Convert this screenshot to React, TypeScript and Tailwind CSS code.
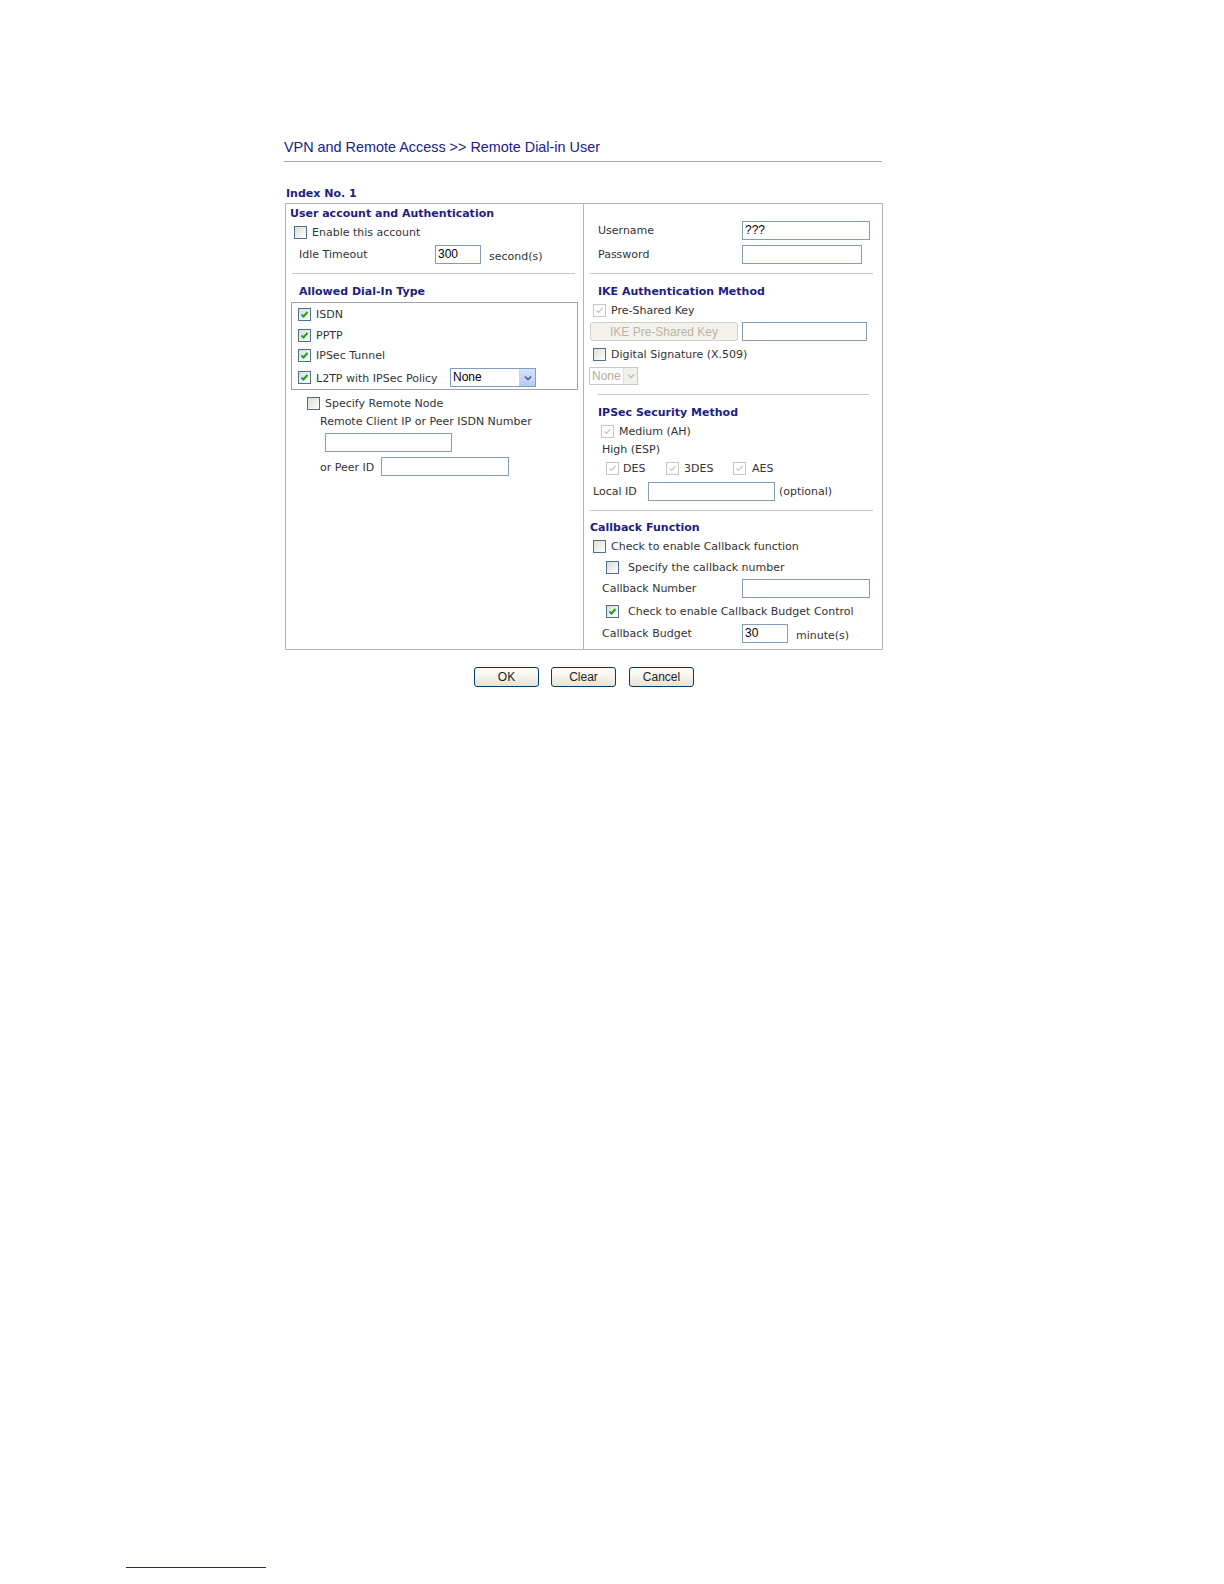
import React from "react";

const F = { fontFamily: '"DejaVu Sans", Verdana, sans-serif' };

function Cb({ checked = false, disabled = false }: { checked?: boolean; disabled?: boolean }) {
  const base = disabled
    ? "border-[#cac8bb] bg-white"
    : "border-[#4f6d8c] bg-gradient-to-br from-[#dcdcd7] to-[#ffffff]";
  return (
    <div className={`w-[13px] h-[13px] shrink-0 border ${base} flex items-center justify-center`}>
      {checked && (
        <svg width="9" height="9" viewBox="0 0 9 9">
          <path
            d="M1.5 4.5 L3.5 6.5 L7.5 2"
            fill="none"
            stroke={disabled ? "#c6c6c6" : "#21a121"}
            strokeWidth={disabled ? 1.2 : 2}
          />
        </svg>
      )}
    </div>
  );
}

function Input({ w, value = "" }: { w: string; value?: string }) {
  return (
    <div
      className={`${w} h-[19px] shrink-0 border border-[#7f9db9] bg-white text-[12px] leading-[17px] pl-[2px] text-black`}
      style={{ fontFamily: '"Liberation Sans", Arial, sans-serif' }}
    >
      {value}
    </div>
  );
}

function Heading({ children, cls }: { children: React.ReactNode; cls: string }) {
  return <div className={`h-[13px] leading-[13px] text-[11px] font-bold text-[#1e1e80] whitespace-nowrap ${cls}`}>{children}</div>;
}

function Txt({ children, cls = "" }: { children: React.ReactNode; cls?: string }) {
  return <div className={`text-[11px] leading-[13px] text-[#333333] whitespace-nowrap ${cls}`}>{children}</div>;
}

function XpButton({ label }: { label: string }) {
  return (
    <div
      className="w-[65px] h-[20px] rounded-[3px] border border-[#003c74] bg-gradient-to-b from-[#ffffff] to-[#e6e4d8] flex items-center justify-center text-[12px] text-[#222222]"
      style={{ fontFamily: '"Liberation Sans", Arial, sans-serif' }}
    >
      {label}
    </div>
  );
}

export default function App() {
  return (
    <div className="w-[1224px] h-[1584px] bg-white flex flex-col" style={F}>
      <div className="pl-[284px] pt-[139px] flex flex-col">
        <div
          className="h-[22px] leading-[16px] text-[14.4px] text-[#202088]"
          style={{ fontFamily: '"Liberation Sans", Arial, sans-serif' }}
        >
          VPN and Remote Access &gt;&gt; Remote Dial-in User
        </div>
        <div className="w-[598px] h-px bg-[#a8a8a8]" />
        <div className="mt-[25px] ml-[2px] h-[13px] leading-[13px] text-[11px] font-bold text-[#1e1e80]">Index No. 1</div>
        {/* Main box */}
        <div className="mt-[3px] ml-[1px] w-[598px] h-[447px] border border-[#b4b4b4] flex">
          {/* Left column */}
          <div className="w-[298px] border-r border-[#b4b4b4] flex flex-col">
            <Heading cls="mt-[3px] ml-[4px]">User account and Authentication</Heading>
            <div className="mt-[6px] ml-[8px] h-[13px] flex items-center">
              <Cb />
              <Txt cls="ml-[5px]">Enable this account</Txt>
            </div>
            <div className="mt-[6px] ml-[13px] h-[19px] flex items-center">
              <Txt cls="w-[136px]">Idle Timeout</Txt>
              <Input w="w-[46px]" value="300" />
              <Txt cls="ml-[8px] mt-[3px]">second(s)</Txt>
            </div>
            <div className="mt-[9px] ml-[6px] w-[283px] h-px bg-[#c8c8c8]" />
            <Heading cls="mt-[11px] ml-[13px]">Allowed Dial-In Type</Heading>
            <div className="mt-[4px] ml-[5px] w-[287px] h-[88px] border border-[#a0a0a0] flex flex-col">
              <div className="mt-[5px] ml-[6px] h-[13px] flex items-center">
                <Cb checked />
                <Txt cls="ml-[5px]">ISDN</Txt>
              </div>
              <div className="mt-[8px] ml-[6px] h-[13px] flex items-center">
                <Cb checked />
                <Txt cls="ml-[5px]">PPTP</Txt>
              </div>
              <div className="mt-[7px] ml-[6px] h-[13px] flex items-center">
                <Cb checked />
                <Txt cls="ml-[5px]">IPSec Tunnel</Txt>
              </div>
              <div className="mt-[6px] ml-[6px] h-[19px] flex items-center">
                <Cb checked />
                <Txt cls="ml-[5px] w-[134px] mt-[2px]">L2TP with IPSec Policy</Txt>
                <div className="w-[86px] h-[19px] border border-[#7f9db9] bg-white flex items-center">
                  <div
                    className="flex-1 text-[12px] leading-[17px] pl-[2px] text-black"
                    style={{ fontFamily: '"Liberation Sans", Arial, sans-serif' }}
                  >
                    None
                  </div>
                  <div className="w-[16px] h-[17px] bg-gradient-to-b from-[#d6e2fc] to-[#b6cbf6] border-l border-[#c3d3fd] flex items-center justify-center">
                    <svg width="8" height="6" viewBox="0 0 8 6">
                      <path d="M1 1.5 L4 4.5 L7 1.5" fill="none" stroke="#4d6185" strokeWidth="1.6" />
                    </svg>
                  </div>
                </div>
              </div>
            </div>
            <div className="mt-[7px] ml-[21px] h-[13px] flex items-center">
              <Cb />
              <Txt cls="ml-[5px]">Specify Remote Node</Txt>
            </div>
            <Txt cls="mt-[5px] ml-[34px] h-[13px]">Remote Client IP or Peer ISDN Number</Txt>
            <div className="mt-[5px] ml-[39px]">
              <Input w="w-[127px]" />
            </div>
            <div className="mt-[5px] ml-[34px] h-[19px] flex items-center">
              <Txt cls="w-[61px] mt-[2px]">or Peer ID</Txt>
              <Input w="w-[128px]" />
            </div>
          </div>
          {/* Right column */}
          <div className="flex-1 flex flex-col">
            <div className="mt-[17px] ml-[14px] h-[19px] flex items-center">
              <Txt cls="w-[144px]">Username</Txt>
              <Input w="w-[128px]" value="???" />
            </div>
            <div className="mt-[5px] ml-[14px] h-[19px] flex items-center">
              <Txt cls="w-[144px]">Password</Txt>
              <Input w="w-[120px]" />
            </div>
            <div className="mt-[9px] ml-[6px] w-[283px] h-px bg-[#c8c8c8]" />
            <Heading cls="mt-[11px] ml-[14px]">IKE Authentication Method</Heading>
            <div className="mt-[6px] ml-[9px] h-[13px] flex items-center">
              <Cb checked disabled />
              <Txt cls="ml-[5px]">Pre-Shared Key</Txt>
            </div>
            <div className="mt-[5px] ml-[6px] h-[19px] flex items-center">
              <div
                className="w-[148px] h-[19px] rounded-[3px] border border-[#d2d0c4] bg-[#f3f2ec] flex items-center justify-center text-[12px] text-[#b8b5a6]"
                style={{ fontFamily: '"Liberation Sans", Arial, sans-serif' }}
              >
                IKE Pre-Shared Key
              </div>
              <div className="ml-[4px]">
                <Input w="w-[125px]" />
              </div>
            </div>
            <div className="mt-[7px] ml-[9px] h-[13px] flex items-center">
              <Cb />
              <Txt cls="ml-[5px]">Digital Signature (X.509)</Txt>
            </div>
            <div className="mt-[6px] ml-[5px] w-[49px] h-[18px] border border-[#cac8bb] bg-white flex items-center">
              <div
                className="flex-1 text-[12px] leading-[16px] pl-[2px] text-[#b0ada0]"
                style={{ fontFamily: '"Liberation Sans", Arial, sans-serif' }}
              >
                None
              </div>
              <div className="w-[14px] h-[16px] bg-[#f1f0ea] border-l border-[#e2e0d6] flex items-center justify-center">
                <svg width="8" height="6" viewBox="0 0 8 6">
                  <path d="M1 1.5 L4 4.5 L7 1.5" fill="none" stroke="#c4c2b6" strokeWidth="1.6" />
                </svg>
              </div>
            </div>
            <div className="mt-[9px] ml-[14px] w-[271px] h-px bg-[#c8c8c8]" />
            <Heading cls="mt-[11px] ml-[14px]">IPSec Security Method</Heading>
            <div className="mt-[6px] ml-[17px] h-[13px] flex items-center">
              <Cb checked disabled />
              <Txt cls="ml-[5px]">Medium (AH)</Txt>
            </div>
            <Txt cls="mt-[5px] ml-[18px] h-[13px]">High (ESP)</Txt>
            <div className="mt-[6px] ml-[22px] h-[13px] flex items-center">
              <div className="w-[60px] flex items-center">
                <Cb checked disabled />
                <Txt cls="ml-[4px]">DES</Txt>
              </div>
              <div className="w-[67px] flex items-center">
                <Cb checked disabled />
                <Txt cls="ml-[5px]">3DES</Txt>
              </div>
              <div className="flex items-center">
                <Cb checked disabled />
                <Txt cls="ml-[6px]">AES</Txt>
              </div>
            </div>
            <div className="mt-[7px] ml-[9px] h-[19px] flex items-center">
              <Txt cls="w-[55px]">Local ID</Txt>
              <Input w="w-[127px]" />
              <Txt cls="ml-[4px]">(optional)</Txt>
            </div>
            <div className="mt-[9px] ml-[6px] w-[283px] h-px bg-[#c8c8c8]" />
            <Heading cls="mt-[10px] ml-[6px]">Callback Function</Heading>
            <div className="mt-[6px] ml-[9px] h-[13px] flex items-center">
              <Cb />
              <Txt cls="ml-[5px]">Check to enable Callback function</Txt>
            </div>
            <div className="mt-[8px] ml-[22px] h-[13px] flex items-center">
              <Cb />
              <Txt cls="ml-[9px]">Specify the callback number</Txt>
            </div>
            <div className="mt-[5px] ml-[18px] h-[19px] flex items-center">
              <Txt cls="w-[140px]">Callback Number</Txt>
              <Input w="w-[128px]" />
            </div>
            <div className="mt-[7px] ml-[22px] h-[13px] flex items-center">
              <Cb checked />
              <Txt cls="ml-[9px]">Check to enable Callback Budget Control</Txt>
            </div>
            <div className="mt-[6px] ml-[18px] h-[19px] flex items-center">
              <Txt cls="w-[140px]">Callback Budget</Txt>
              <Input w="w-[46px]" value="30" />
              <Txt cls="ml-[8px] mt-[3px]">minute(s)</Txt>
            </div>
          </div>
        </div>
        <div className="mt-[17px] ml-[190px] flex">
          <XpButton label="OK" />
          <div className="ml-[12px]">
            <XpButton label="Clear" />
          </div>
          <div className="ml-[13px]">
            <XpButton label="Cancel" />
          </div>
        </div>
      </div>
      <div className="mt-[880px] ml-[126px] w-[140px] h-px bg-[#1f2a6b]" />
    </div>
  );
}
